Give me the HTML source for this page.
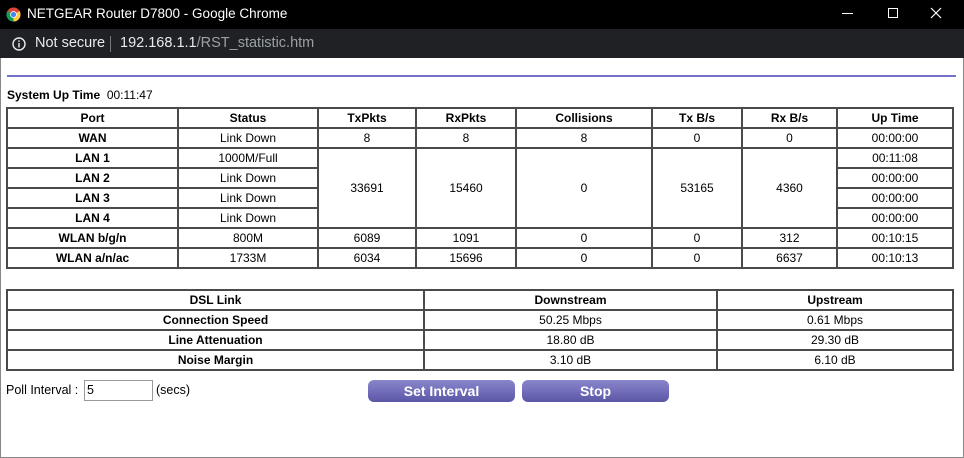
<!DOCTYPE html>
<html><head><style>
*{margin:0;padding:0;box-sizing:border-box}
body{width:964px;height:458px;background:#fff;font-family:"Liberation Sans",Arial,sans-serif;position:relative;overflow:hidden}
.title{position:absolute;left:0;top:0;width:964px;height:29px;background:#000;color:#fff;font-size:13.5px}
.addr{position:absolute;left:0;top:29px;width:964px;height:29px;background:#202124;color:#e8eaed;font-size:14.5px}
.page{position:absolute;left:0;top:58px;width:964px;height:400px;border-left:1px solid #888;border-right:1px solid #888;border-bottom:1px solid #888}
.line{position:absolute;left:7px;top:75px;width:949px;height:2px;background:#7570c8}
table{position:absolute;border-collapse:collapse;table-layout:fixed;font-size:12px;color:#000}
td{border:2px solid #4a4a4a;text-align:center;height:20px;padding:0;line-height:16px}
.b{font-weight:bold}
.btn{position:absolute;top:380px;height:22px;border-radius:6px;background:linear-gradient(#8a86cc,#5a56a6);color:#fff;font-weight:bold;font-size:14px;text-align:center;line-height:22px}
</style></head><body>
<div class="title">
<svg style="position:absolute;left:6px;top:7px" width="15" height="15" viewBox="0 0 16 16"><circle cx="8" cy="8" r="7.5" fill="#db4437"/><path d="M8 8 L14.5 4.3 A7.5 7.5 0 0 1 8 15.5 Z" fill="#ffcd40"/><path d="M8 8 L8 15.5 A7.5 7.5 0 0 1 1.5 4.2 Z" fill="#0f9d58"/><circle cx="8" cy="8" r="3.6" fill="#fff"/><circle cx="8" cy="8" r="2.8" fill="#4285f4"/></svg>
<span style="position:absolute;left:27px;top:6px">NETGEAR Router D7800 - Google Chrome</span>
<div style="position:absolute;left:842px;top:13px;width:11px;height:1px;background:#fff"></div>
<div style="position:absolute;left:888px;top:8px;width:10px;height:10px;border:1px solid #fff"></div>
<svg style="position:absolute;left:930px;top:7px" width="12" height="12"><path d="M1 1L11 11M11 1L1 11" stroke="#fff" stroke-width="1.2"/></svg>
</div>
<div class="addr">
<svg style="position:absolute;left:12px;top:8px" width="14" height="14"><circle cx="7" cy="7" r="6" fill="none" stroke="#e8eaed" stroke-width="1.4"/><rect x="6.3" y="6" width="1.4" height="4.5" fill="#e8eaed"/><rect x="6.3" y="3.4" width="1.4" height="1.5" fill="#e8eaed"/></svg>
<span style="position:absolute;left:35px;top:6px">Not secure</span>
<div style="position:absolute;left:110px;top:7px;width:1px;height:16px;background:#777"></div>
<span style="position:absolute;left:120px;top:6px">192.168.1.1<span style="color:#9aa0a6">/RST_statistic.htm</span></span>
</div>
<div class="page"></div>
<div class="line"></div>
<div style="position:absolute;left:7px;top:88px;font-size:12px"><b>System Up Time</b>&nbsp; 00:11:47</div>
<table style="left:6px;top:107px;width:946px">
<colgroup><col style="width:171px"><col style="width:140px"><col style="width:98px"><col style="width:100px"><col style="width:136px"><col style="width:90px"><col style="width:95px"><col style="width:116px"></colgroup>
<tr class="b"><td>Port</td><td>Status</td><td>TxPkts</td><td>RxPkts</td><td>Collisions</td><td>Tx B/s</td><td>Rx B/s</td><td>Up Time</td></tr>
<tr><td class="b">WAN</td><td>Link Down</td><td>8</td><td>8</td><td>8</td><td>0</td><td>0</td><td>00:00:00</td></tr>
<tr><td class="b">LAN 1</td><td>1000M/Full</td><td rowspan="4">33691</td><td rowspan="4">15460</td><td rowspan="4">0</td><td rowspan="4">53165</td><td rowspan="4">4360</td><td>00:11:08</td></tr>
<tr><td class="b">LAN 2</td><td>Link Down</td><td>00:00:00</td></tr>
<tr><td class="b">LAN 3</td><td>Link Down</td><td>00:00:00</td></tr>
<tr><td class="b">LAN 4</td><td>Link Down</td><td>00:00:00</td></tr>
<tr><td class="b">WLAN b/g/n</td><td>800M</td><td>6089</td><td>1091</td><td>0</td><td>0</td><td>312</td><td>00:10:15</td></tr>
<tr><td class="b">WLAN a/n/ac</td><td>1733M</td><td>6034</td><td>15696</td><td>0</td><td>0</td><td>6637</td><td>00:10:13</td></tr>
</table>
<table style="left:6px;top:289px;width:946px">
<colgroup><col style="width:417px"><col style="width:293px"><col style="width:236px"></colgroup>
<tr class="b"><td>DSL Link</td><td>Downstream</td><td>Upstream</td></tr>
<tr><td class="b">Connection Speed</td><td>50.25 Mbps</td><td>0.61 Mbps</td></tr>
<tr><td class="b">Line Attenuation</td><td>18.80 dB</td><td>29.30 dB</td></tr>
<tr><td class="b">Noise Margin</td><td>3.10 dB</td><td>6.10 dB</td></tr>
</table>
<div style="position:absolute;left:6px;top:383px;font-size:12.5px">Poll Interval :</div>
<div style="position:absolute;left:84px;top:380px;width:69px;height:21px;border:1px solid #999;font-size:12.5px;padding:2px 2px">5</div>
<div style="position:absolute;left:156px;top:383px;font-size:12.5px">(secs)</div>
<div class="btn" style="left:368px;width:147px">Set Interval</div>
<div class="btn" style="left:522px;width:147px">Stop</div>
</body></html>
